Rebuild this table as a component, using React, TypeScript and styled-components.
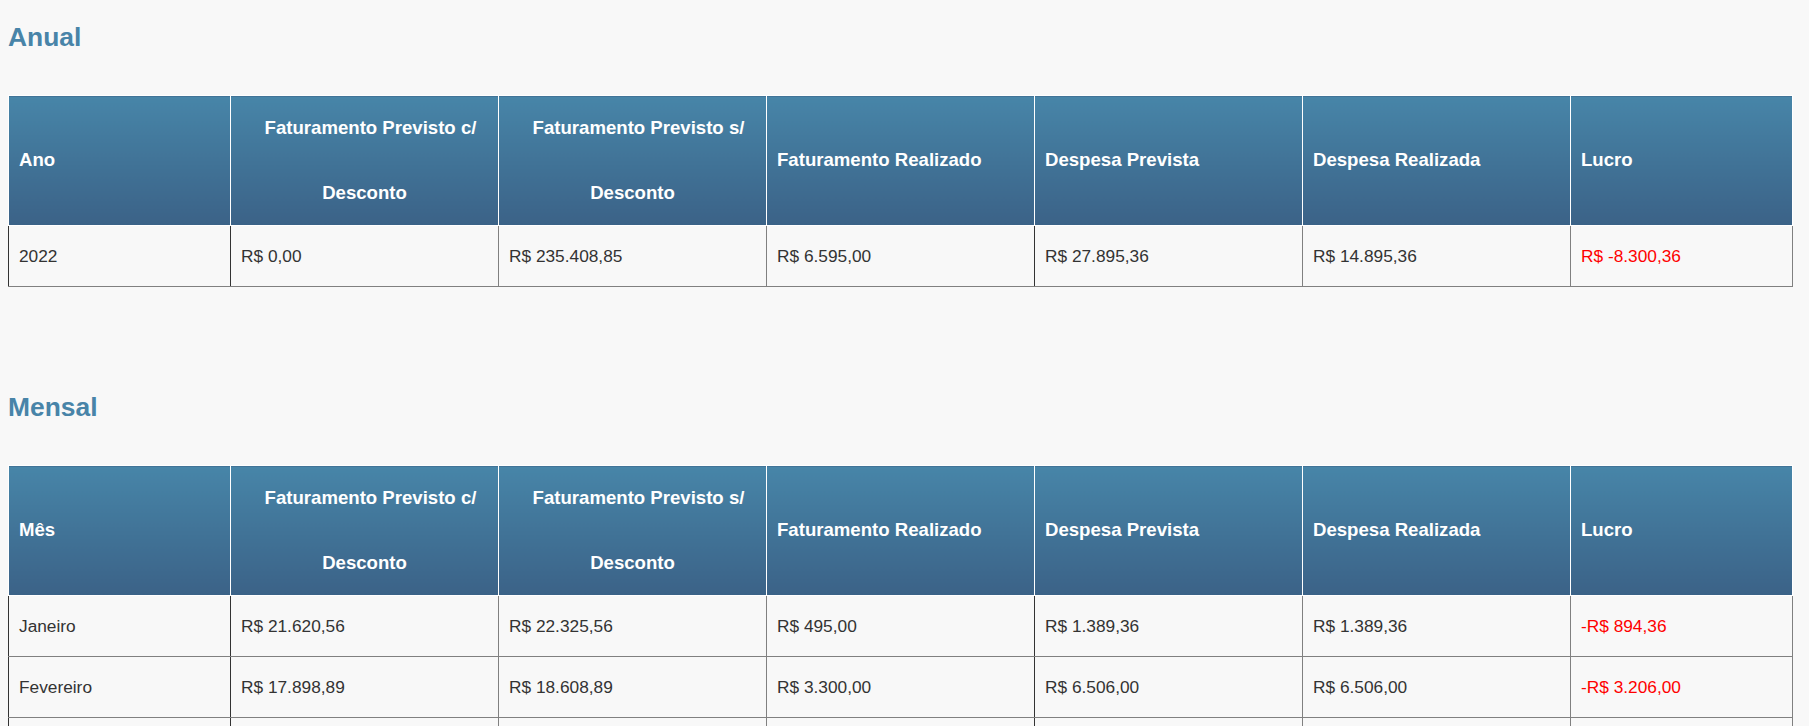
import React from 'react';
import { styled, createGlobalStyle } from 'styled-components';

type Row = string[];

interface Column {
  label: string;
  width: number;
  center?: boolean;
}

const buildColumns = (first: string): Column[] => [
  { label: first, width: 222 },
  { label: 'Faturamento Previsto c/ Desconto', width: 268, center: true },
  { label: 'Faturamento Previsto s/ Desconto', width: 268, center: true },
  { label: 'Faturamento Realizado', width: 268 },
  { label: 'Despesa Prevista', width: 268 },
  { label: 'Despesa Realizada', width: 268 },
  { label: 'Lucro', width: 222 },
];

const annualRows: Row[] = [
  ['2022', 'R$ 0,00', 'R$ 235.408,85', 'R$ 6.595,00', 'R$ 27.895,36', 'R$ 14.895,36', 'R$ -8.300,36'],
];

// the third month only shows its top edge in the frame, so its cells stay empty
const monthlyRows: Row[] = [
  ['Janeiro', 'R$ 21.620,56', 'R$ 22.325,56', 'R$ 495,00', 'R$ 1.389,36', 'R$ 1.389,36', '-R$ 894,36'],
  ['Fevereiro', 'R$ 17.898,89', 'R$ 18.608,89', 'R$ 3.300,00', 'R$ 6.506,00', 'R$ 6.506,00', '-R$ 3.206,00'],
  ['', '', '', '', '', '', ''],
];

// columns whose left / right edge is drawn darker in the data rows
const darkLeft = [0, 1, 4];
const darkRight = [0, 3];

const isNegative = (value: string) => value.includes('-');

interface ReportTableProps {
  title: string;
  firstColumn: string;
  rows: Row[];
}

const ReportTable = ({ title, firstColumn, rows }: ReportTableProps) => {
  const columns = buildColumns(firstColumn);
  return (
    <Styled.Section>
      <Styled.Title>{title}</Styled.Title>
      <Styled.Table>
        <colgroup>
          {columns.map((col, i) => (
            <col key={i} style={{ width: col.width }} />
          ))}
        </colgroup>
        <thead>
          <tr>
            {columns.map((col, i) => (
              <Styled.HeadCell key={i} $center={col.center}>
                {col.label}
              </Styled.HeadCell>
            ))}
          </tr>
        </thead>
        <tbody>
          {rows.map((row, r) => (
            <tr key={r}>
              {row.map((value, i) => (
                <Styled.Cell
                  key={i}
                  $darkLeft={darkLeft.includes(i)}
                  $darkRight={darkRight.includes(i)}
                  $negative={i === row.length - 1 && isNegative(value)}
                >
                  {value}
                </Styled.Cell>
              ))}
            </tr>
          ))}
        </tbody>
      </Styled.Table>
    </Styled.Section>
  );
};

export default function App() {
  return (
    <>
      <GlobalStyle />
      <Styled.Page>
        <ReportTable title="Anual" firstColumn="Ano" rows={annualRows} />
        <ReportTable title="Mensal" firstColumn="Mês" rows={monthlyRows} />
      </Styled.Page>
    </>
  );
}

const GlobalStyle = createGlobalStyle`
  html, body {
    margin: 0;
    background: #f8f8f8;
  }
  body {
    font-family: 'Liberation Sans', Arial, Helvetica, sans-serif;
  }
`;

const Styled = {
  Page: styled.main`
    padding: 0 8px;
  `,

  Section: styled.section`
    padding-top: 22px;

    & + & {
      margin-top: 83px;
    }
  `,

  Title: styled.h3`
    margin: 0 0 43px;
    font-size: 26.4px;
    line-height: 30px;
    font-weight: 700;
    color: #4884a8;
  `,

  Table: styled.table`
    width: 1784px;
    table-layout: fixed;
    border-collapse: collapse;
  `,

  HeadCell: styled.th<{ $center?: boolean }>`
    padding: 0 10px;
    border: 1px solid #ffffff;
    background: linear-gradient(to bottom, #4785a8, #3b6287);
    color: #ffffff;
    font-size: 18.6px;
    font-weight: 700;
    line-height: 64.5px;
    vertical-align: middle;
    text-align: ${({ $center }) => ($center ? 'center' : 'left')};
    text-indent: ${({ $center }) => ($center ? '12px' : '0')};
  `,

  Cell: styled.td<{ $darkLeft?: boolean; $darkRight?: boolean; $negative?: boolean }>`
    height: 60px;
    padding: 0 10px;
    border: 1px solid #808080;
    border-left-color: ${({ $darkLeft }) => ($darkLeft ? '#333333' : '#808080')};
    border-right-color: ${({ $darkRight }) => ($darkRight ? '#333333' : '#808080')};
    font-size: 17.3px;
    line-height: 20px;
    vertical-align: middle;
    color: ${({ $negative }) => ($negative ? '#ff0000' : '#333333')};
  `,
};
